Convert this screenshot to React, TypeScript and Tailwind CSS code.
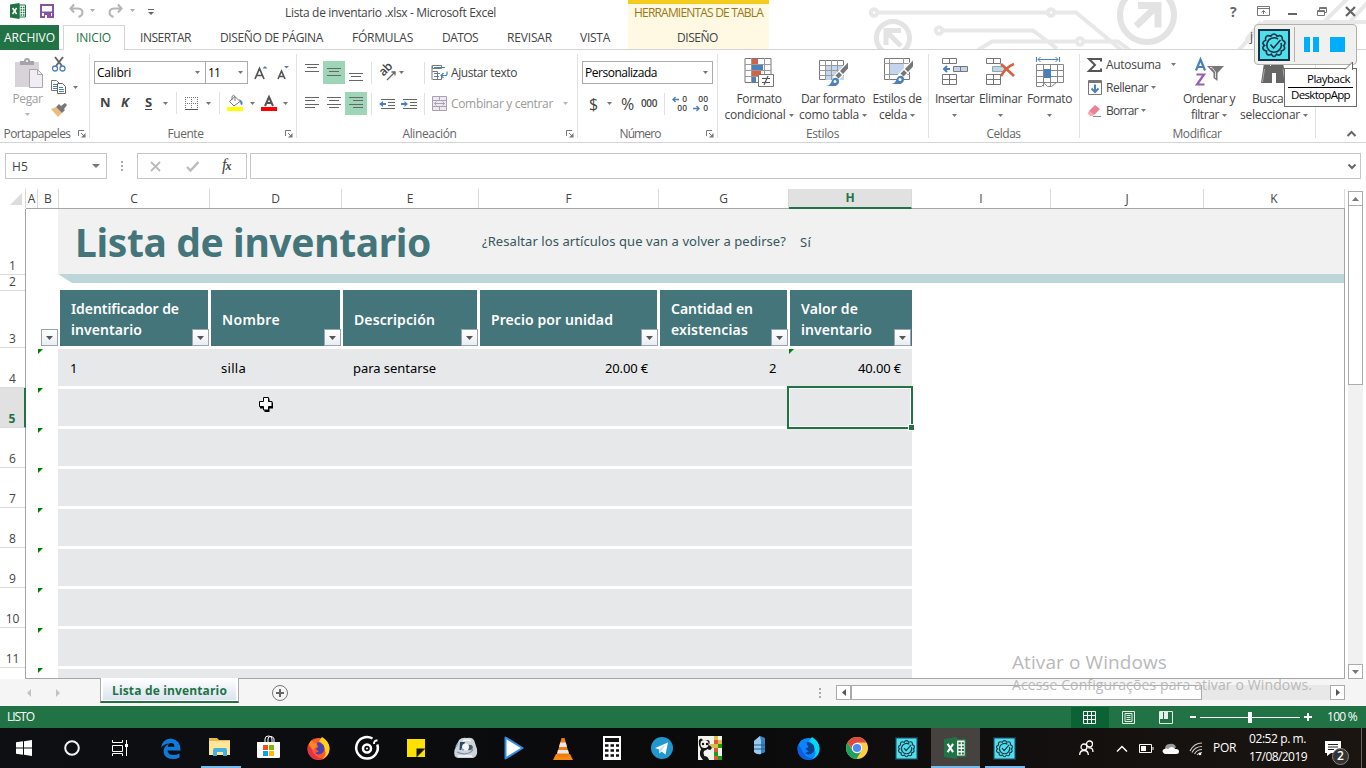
import { useLayoutEffect, useRef, useState, type ReactNode } from "react";

/* Single-line label whose tracking is adjusted so that it fills a given width. */
function T({ w, className = "", children }: { w: number; className?: string; children: string }) {
  const ref = useRef<HTMLSpanElement>(null);
  const [ls, setLs] = useState(0);
  useLayoutEffect(() => {
    const el = ref.current;
    if (el) setLs((w - el.getBoundingClientRect().width) / children.length);
  }, []);
  return (
    <span className={"block shrink-0 whitespace-nowrap " + className} style={{ width: w }}>
      <span ref={ref} className="inline-block" style={{ letterSpacing: ls }}>{children}</span>
    </span>
  );
}

function Svg({ w, h, className = "", children }: { w: number; h: number; className?: string; children: ReactNode }) {
  return (
    <svg width={w} height={h} viewBox={`0 0 ${w} ${h}`} fill="none" className={"block shrink-0 overflow-visible " + className}>
      {children}
    </svg>
  );
}

const Arrow = ({ className = "", c = "#777" }: { className?: string; c?: string }) => (
  <Svg w={5} h={3} className={className}><path d="M0 0h5L2.500 3z" fill={c} /></Svg>
);

const Sep = ({ className = "" }: { className?: string }) => <div className={"h-[22px] w-px shrink-0 bg-[#e1e1e1] " + className} />;

function Group({ className, label, lw, launcher = false, children }: { className: string; label: string; lw: number; launcher?: boolean; children: ReactNode }) {
  return (
    <div className={"flex h-[92px] shrink-0 flex-col " + className}>
      <div className="h-[75px] shrink-0">{children}</div>
      <div className="flex h-[17px] items-center text-[#666]">
        <div className="flex flex-1 justify-center pr-px"><T w={lw}>{label}</T></div>
        {launcher && (
          <div className="w-[14px] shrink-0 pl-[3px]">
            <Svg w={8} h={8}>
              <path d="M0.500 6V0.500H6M3 3l3 3" stroke="#777" /><path d="M7.500 3v4.500H3z" fill="#777" />
            </Svg>
          </div>
        )}
      </div>
    </div>
  );
}

const GroupSep = () => <div className="mt-[4px] h-[84px] w-px shrink-0 bg-[#e1e1e1]" />;

function Big({ className, icon, l1, w1, l2, w2 }: { className: string; icon: ReactNode; l1: string; w1: number; l2?: string; w2?: number }) {
  return (
    <div className={"flex shrink-0 flex-col items-center pt-[7px] " + className}>
      <div className="h-[34px]">{icon}</div>
      <div className="flex h-4 items-center"><T w={w1}>{l1}</T></div>
      <div className="flex h-4 items-center">
        {l2 && <T w={w2 ?? 0} className="mr-[3px]">{l2}</T>}
        <Arrow />
      </div>
    </div>
  );
}

const Lines = ({ d, className = "" }: { d: string; className?: string }) => (
  <Svg w={14} h={23} className={className}><path d={d} stroke="#666" /></Svg>
);

function Gear({ size }: { size: number }) {
  return (
    <svg width={size} height={size} viewBox="0 0 32 32" fill="none" className="block shrink-0">
      <rect x="1" y="1" width="30" height="30" fill="#4de0ea" stroke="#17344a" strokeWidth="2" />
      <g stroke="#17344a" strokeWidth="1.600">
        <path d="M16 5q2 0 3 2.200 3-1.200 4.300 0t1 3.700q2.700 1 2.700 3t-1.500 2.600q1.500 1.500 1 3.300t-3.200 2.200q.3 3-1.300 3.800t-3.500-.6Q17.500 27.500 16 27.500t-2.500-2.300q-2.500 1.300-4 .3t-1-3.500Q5.500 21.500 5 19.500t1.500-3Q4.500 15 5 13.500t2.700-2.300Q7 8.500 8.500 7.300t4.300-.1Q14 5 16 5z" />
        <path d="M20 10a7.200 7.200 0 1 0 3 4M12.500 15.500l3 3.500 7-8" />
      </g>
    </svg>
  );
}

function ExcelLogo({ size }: { size: number }) {
  return (
    <svg width={size} height={size} viewBox="0 0 16 16" className="block shrink-0">
      <path d="M9 2h6.500v12H9z" fill="#fff" stroke="#217346" />
      <path d="M10.500 4.500h1.700M13 4.500h1.500M10.500 7h1.700M13 7h1.500M10.500 9.500h1.700M13 9.500h1.500M10.500 12h1.700M13 12h1.500" stroke="#217346" strokeWidth="1.400" />
      <path d="M0 1.500L9.500 0v16L0 14.500z" fill="#217346" />
      <path d="M2.600 5l4 6M6.600 5l-4 6" stroke="#fff" strokeWidth="1.500" />
    </svg>
  );
}

function TitleBar() {
  return (
    <div className="relative flex h-[25px] items-start">
      <div className="ml-[10px] mt-[3px]"><ExcelLogo size={16} /></div>
      <Svg w={14} h={14} className="ml-[14px] mt-[4px]">
        <path d="M1 1h12v12H1z" fill="#fff" stroke="#8553a4" strokeWidth="2" /><path d="M2 7.500h10V9H2zM4 9h7v4H4z" fill="#8553a4" /><path d="M5 11h2v3H5z" fill="#fff" />
      </Svg>
      <Svg w={15} h={14} className="ml-[15px] mt-[4px]"><path d="M5 0.500L1.500 4.500 5 8.500M2 4.500h7q4.500.3 4.500 4 0 3-4 4.500" stroke="#b5b5b5" strokeWidth="2" /></Svg>
      <Arrow className="ml-[6px] mt-[9px]" c="#aaa" />
      <Svg w={15} h={14} className="ml-[13px] mt-[4px]"><path d="M10 0.500l3.500 4L10 8.500M13 4.500H6Q1.500 4.800 1.500 8.500q0 3 4 4.500" stroke="#b5b5b5" strokeWidth="2" /></Svg>
      <Arrow className="ml-[7px] mt-[9px]" c="#aaa" />
      <Svg w={6} h={6} className="ml-[13px] mt-[9px]"><path d="M0 .5h6" stroke="#666" /><path d="M0 3h6L3 6z" fill="#666" /></Svg>
      <div className="ml-[131px] flex h-[25px] items-center text-[#444]"><T w={211}>Lista de inventario .xlsx - Microsoft Excel</T></div>
      <div className="ml-[132px] flex h-[25px] w-[141px] shrink-0 items-center border-t-4 border-[#f5cb1d] bg-[#fff9e4] pb-[4px] text-[#9a7812]">
        <T w={129} className="ml-[6px]">HERRAMIENTAS DE TABLA</T>
      </div>
      <div className="ml-[461px] flex h-[22px] items-center">
        <span className="w-[9px] text-[14px] font-bold text-[#666]">?</span>
        <Svg w={13} h={10} className="ml-[18px]"><path d="M.5.500h12v9H.500zM.5 2.500h12M6.500 8V4.500M4.500 6.500l2-2 2 2" stroke="#777" /></Svg>
        <div className="ml-[18px] mt-[5px] h-[2px] w-[9px] bg-[#666]" />
        <Svg w={10} h={9} className="ml-[20px]"><path d="M.5 3.500h7v5h-7zM.5 4.500h7M2.500 3V.500h7v5H8M2.500 1.500h7" stroke="#777" /></Svg>
        <Svg w={9} h={9} className="ml-[19px]"><path d="M0 0l9 9M9 0L0 9" stroke="#666" strokeWidth="2.200" /></Svg>
      </div>
    </div>
  );
}

function Tabs() {
  return (
    <div className="relative flex h-[25px] text-[#444]">
      <div className="flex h-[25px] w-[59px] shrink-0 items-center bg-[#217346] text-white"><T w={51} className="ml-[4px]">ARCHIVO</T></div>
      <div className="flex flex-1 border-b border-[#d4d4d4]">
        <div className="-mb-px ml-[4px] flex h-[25px] w-[62px] shrink-0 items-center border-x border-t border-[#d4d4d4] bg-white text-[#217346]"><T w={35} className="ml-[12px]">INICIO</T></div>
        <div className="flex items-center pt-px">
          <T w={51} className="ml-[15px]">INSERTAR</T>
          <T w={103} className="ml-[29px]">DISEÑO DE PÁGINA</T>
          <T w={61} className="ml-[29px]">FÓRMULAS</T>
          <T w={36} className="ml-[29px]">DATOS</T>
          <T w={45} className="ml-[29px]">REVISAR</T>
          <T w={30} className="ml-[28px]">VISTA</T>
        </div>
        <div className="ml-[18px] flex w-[141px] shrink-0 items-center bg-[#fff9e4] pt-px"><T w={41} className="ml-[49px]">DISEÑO</T></div>
        <span className="ml-[481px] flex items-center">j</span>
      </div>
    </div>
  );
}

function Circuit() {
  return (
    <svg width="520" height="49" viewBox="846 0 520 49" fill="none" className="absolute left-[846px] top-0">
      <g stroke="#e8e8e8" strokeWidth="4">
        <path d="M878 12.500h169M1055 12.500h21l46 38M943 30.500h90l24 18M978 50l14-8.500h84M1083 41.500h35l12 9" />
        <path d="M1237 52l28-30h101M1322 24l26-26M1348 24l20-22M1246 40l15-18" />
        <circle cx="874" cy="12.500" r="3.200" /><circle cx="1051" cy="12.500" r="3.200" /><circle cx="939" cy="30.500" r="3.200" /><circle cx="1080" cy="41.500" r="3.200" />
      </g>
      <circle cx="893" cy="38" r="16.500" stroke="#e3e3e3" strokeWidth="5" />
      <path d="M901 46l-13-13M886 45V30.500h15" stroke="#e3e3e3" strokeWidth="5" />
      <circle cx="1147" cy="15" r="27" stroke="#e3e3e3" strokeWidth="6" />
      <path d="M1136 26l22-21M1138 5.500h20v22" stroke="#e3e3e3" strokeWidth="7" />
    </svg>
  );
}

const Brush = () => (
  <>
    <path d="M29 3.500v6L19 21l-4-3z" fill="#fff" stroke="#fff" strokeWidth="2" />
    <path d="M29 3.500v6l-5 5.500-3-3zM20 13l3 3-3.500 3.500-3-3z" fill="#777" />
    <path d="M7 27q5-.5 6-6 3-4 6.500-1 2 5-3 7z" fill="#4a81bb" /><circle cx="16" cy="22.500" r="1.500" fill="#fff" />
  </>
);

function Ribbon() {
  return (
    <div className="flex h-[93px] border-b border-[#d4d4d4] text-[#444]">
      <Group className="w-[89px]" label="Portapapeles" lw={67} launcher>
        <div className="flex">
          <div className="ml-[12px] flex w-[31px] flex-col items-center pt-[8px] text-[#a0a0a0]">
            <Svg w={29} h={30} className="ml-[2px]">
              <path d="M1 4h24v25H1z" fill="#d8d3d8" /><path d="M6 7V3h4q0-3 3-3t3 3h4v4z" fill="#a7a3a7" /><circle cx="13" cy="3" r="1" fill="#fff" />
              <path d="M15.500 11.500h8l5 5v13h-13z" fill="#f1edf5" stroke="#aaa6ac" /><path d="M23.500 11.500v5h5" stroke="#aaa6ac" />
            </Svg>
            <T w={30} className="mt-[2px] leading-[18px]">Pegar</T>
            <Arrow className="mt-[5px]" c="#b5b5b5" />
          </div>
          <div className="ml-[8px] pt-[7px]">
            <Svg w={16} h={15}><path d="M4 0l7 9M12 0L5 9" stroke="#666" strokeWidth="2" /><circle cx="4" cy="11.500" r="2.500" stroke="#4a81bb" strokeWidth="1.300" /><circle cx="11.500" cy="11.500" r="2.500" stroke="#4a81bb" strokeWidth="1.300" /></Svg>
            <div className="mt-[8px] flex items-center">
              <Svg w={16} h={14}>
                <path d="M.5.500h5l3 3v7h-8z" fill="#fff" stroke="#777" /><path d="M2 4.500h4M2 6.500h4M2 8.500h4" stroke="#4a81bb" />
                <path d="M6.500 3.500h5l3 3v7h-8z" fill="#fff" stroke="#666" /><path d="M8 7.500h4M8 9.500h5M8 11.500h5" stroke="#4a81bb" />
              </Svg>
              <Arrow className="ml-[6px]" />
            </div>
            <Svg w={16} h={14} className="mt-[9px]"><path d="M0 6l5-2 6 6-4 4z" fill="#e9bd7d" /><path d="M5 4l3-3 6 6-3 3zM10 3l4-3 2 2-3 4z" fill="#777" /></Svg>
          </div>
        </div>
      </Group>
      <GroupSep />
      <Group className="w-[206px]" label="Fuente" lw={36} launcher>
        <div className="ml-[4px] flex items-center pt-[11px]">
          <div className="flex h-[23px] w-[112px] shrink-0 items-center border border-[#ababab] text-black"><T w={34} className="ml-[2px]">Calibri</T><Arrow className="ml-[64px]" /></div>
          <div className="-ml-px flex h-[23px] w-[43px] shrink-0 items-center border border-[#ababab] text-black"><T w={12} className="ml-[2px]">11</T><Arrow className="ml-[18px]" /></div>
          <Svg w={13} h={14} className="ml-[6px]"><path d="M1 13L5.500 2.500 10 13M2.500 9.500h6" stroke="#555" strokeWidth="1.700" /><path d="M8.500 2.500h5L11 0z" fill="#4a81bb" /></Svg>
          <Svg w={12} h={14} className="ml-[10px]"><path d="M1 13l3.500-8L8 13M2.500 10.500h4" stroke="#555" strokeWidth="1.600" /><path d="M7 0h5L9.500 2.500z" fill="#4a81bb" /></Svg>
        </div>
        <div className="ml-[10px] mt-[7px] flex h-[24px] items-center text-[13px] font-bold">
          <T w={9}>N</T><T w={9} className="ml-[12px] italic">K</T><T w={7} className="ml-[15px] [&>span]:underline [&>span]:underline-offset-2">S</T>
          <Arrow className="ml-[11px]" /><Sep className="ml-[8px]" />
          <Svg w={13} h={13} className="ml-[8px]"><path d="M.5 0v12M6.500 0v12M12.500 0v12M0 .5h13M0 6.500h13" stroke="#777" strokeDasharray="1 1" /><path d="M0 12.500h13" stroke="#555" /></Svg>
          <Arrow className="ml-[8px]" /><Sep className="ml-[8px]" />
          <Svg w={16} h={16} className="ml-[7px]">
            <path d="M2.500 6.500L8 1.500l5 5-6 4.500zM5 5V1.500Q6.500-1 8 1.500V6" fill="#fff" stroke="#777" /><path d="M12 4q5 2 3 6.500Q13 9 13 6z" fill="#4a81bb" /><path d="M0 12h16v4H0z" fill="#ff0" />
          </Svg>
          <Arrow className="ml-[7px]" />
          <Svg w={16} h={15} className="ml-[6px]"><path d="M4 10L8 1l4 9M5.500 7h5" stroke="#555" strokeWidth="2" /><path d="M0 11h16v4H0z" fill="#f00" /></Svg>
          <Arrow className="ml-[6px]" />
        </div>
      </Group>
      <GroupSep />
      <Group className="w-[280px]" label="Alineación" lw={54} launcher>
        <div className="ml-[8px] flex items-center pt-[11px]">
          <Lines d="M0 3.500h14M2 6.500h10M0 10.500h14" />
          <div className="ml-[4px] bg-[#9fd5b7] px-[4px]"><Lines d="M0 7.500h14M2 10.500h10M0 14.500h14" /></div>
          <Lines className="ml-[4px]" d="M0 12.500h14M2 15.500h10M0 19.500h14" />
          <Sep className="ml-[8px]" />
          <div className="ml-[7px] flex w-[16px] items-center">
            <span className="-mt-[5px] block w-[11px] -rotate-45 text-[12px] font-semibold leading-none tracking-tighter">ab</span>
            <Svg w={9} h={9} className="-ml-[3px] mt-[5px]"><path d="M0 9L8 1M4.500 1H8v3.500" stroke="#666" strokeWidth="1.300" /></Svg>
          </div>
          <Arrow className="ml-[4px]" /><Sep className="ml-[20px]" />
          <Svg w={16} h={15} className="ml-[7px]">
            <path d="M.5.500h9v3h-9zM.5 6.500h5v8h-5" stroke="#777" /><path d="M0 .5v14M9.500 11v3.500H5" stroke="#777" /><path d="M2 2.500h11M2 8.500h6M2 11.500h5M9 10.500h5q1.500-.5 1-4M11.500 8L9 10.500l2.500 2.500" stroke="#4a81bb" strokeWidth="1.200" />
          </Svg>
          <T w={66} className="ml-[3px]">Ajustar texto</T>
        </div>
        <div className="ml-[8px] mt-[8px] flex items-center">
          <Lines d="M0 5.500h14M0 8.500h10M0 12.500h14M0 15.500h10" />
          <Lines className="ml-[8px]" d="M0 5.500h14M2 8.500h10M0 12.500h14M2 15.500h10" />
          <div className="ml-[4px] bg-[#9fd5b7] px-[4px]"><Lines d="M0 5.500h14M4 8.500h10M0 12.500h14M4 15.500h10" /></div>
          <Sep className="ml-[4px]" />
          <Svg w={16} h={10} className="ml-[7px]"><path d="M2 .5h14M9 3.500h7M9 6.500h7M2 9.500h14" stroke="#666" /><path d="M0 5l4-3v2h3v2H4v2z" fill="#4a81bb" /></Svg>
          <Svg w={16} h={10} className="ml-[6px]"><path d="M2 .5h14M9 3.500h7M9 6.500h7M2 9.500h14" stroke="#666" /><path d="M7 5L3.500 2v2H0v2h3.500v2z" fill="#4a81bb" /></Svg>
          <Sep className="ml-[7px]" />
          <Svg w={15} h={15} className="ml-[7px]"><path d="M.5.500h14v14H.500zM0 4.500h15M0 10.500h15M7.500 0v4M7.500 11v4" fill="#f0e9f5" stroke="#a8a3ab" /><path d="M2.500 7.500h10M4.500 5.500l-2 2 2 2M10.500 5.500l2 2-2 2" stroke="#a8a3ab" /></Svg>
          <T w={102} className="ml-[4px] text-[#9b9b9b]">Combinar y centrar</T>
          <Arrow className="ml-[10px]" c="#b5b5b5" />
        </div>
      </Group>
      <GroupSep />
      <Group className="w-[139px]" label="Número" lw={41} launcher>
        <div className="ml-[4px] mt-[11px] flex h-[23px] w-[131px] items-center justify-between border border-[#ababab] pl-[2px] pr-[4px] text-black"><T w={72}>Personalizada</T><Arrow /></div>
        <div className="ml-[11px] mt-[8px] flex h-[23px] items-center">
          <T w={9} className="text-[16px]">$</T><Arrow className="ml-[9px]" />
          <T w={13} className="ml-[9px] text-[16px]">%</T>
          <T w={16} className="ml-[7px] text-[10px] font-semibold">000</T>
          <Sep className="ml-[7px]" />
          <div className="ml-[7px] flex w-[15px] flex-col gap-px text-[8.5px] font-semibold leading-[8px]">
            <div className="flex h-[8px] items-center justify-between"><Svg w={7} h={5}><path d="M7 2.500H1.500M3.500 0L1 2.500 3.500 5" stroke="#4a81bb" strokeWidth="1.400" /></Svg><span>0</span></div>
            <div className="h-[8px] text-right">00</div>
          </div>
          <div className="ml-[6px] flex w-[15px] flex-col gap-px text-[8.5px] font-semibold leading-[8px]">
            <div className="h-[8px] text-right">00</div>
            <div className="flex h-[8px] items-center justify-between"><Svg w={7} h={5}><path d="M0 2.500h5.500M3.500 0L6 2.500 3.500 5" stroke="#4a81bb" strokeWidth="1.400" /></Svg><span>0</span></div>
          </div>
        </div>
      </Group>
      <GroupSep />
      <Group className="w-[210px]" label="Estilos" lw={33}>
        <div className="flex">
          <Big className="ml-[4px] w-[74px]" l1="Formato" w1={45} l2="condicional" w2={61} icon={
            <Svg w={30} h={31}>
              <path d="M1 1.500h26v24H1z" fill="#fff" stroke="#777" /><path d="M1 7.500h26M1 13.500h26M1 19.500h26M7.500 1v25M20.500 1v25" stroke="#999" />
              <path d="M8 2h6v5H8zM8 14h9v5H8z" fill="#d6603f" /><path d="M8 8h11v5H8zM8 20h4v5H8z" fill="#4a81bb" />
              <path d="M14.500 17.500h15v12h-15z" fill="#fff" stroke="#777" /><path d="M18 21.500h8M18 25.500h8M24 19l-4 9" stroke="#555" strokeWidth="1.200" />
            </Svg>} />
          <Big className="ml-[2px] w-[70px]" l1="Dar formato" w1={64} l2="como tabla" w2={60} icon={
            <Svg w={29} h={31} className="mt-[2px]">
              <path d="M.5 1.500h24v19H.500z" fill="#fff" stroke="#777" /><path d="M7 7h18v14H7z" fill="#c3d5ec" />
              <path d="M0 6.500h25M0 11.500h25M0 16.500h25M6.500 1v20M12.500 1v20M18.500 1v20" stroke="#999" /><Brush />
            </Svg>} />
          <Big className="ml-[2px] w-[54px]" l1="Estilos de" w1={49} l2="celda" w2={28} icon={
            <Svg w={29} h={31} className="ml-[2px]">
              <path d="M.5 1.500h25v21H.500z" fill="#fff" stroke="#777" /><path d="M0 6.500h26M0 17.500h26M5.500 1v22M19.500 1v22" stroke="#999" /><path d="M6 7h14v10H6z" fill="#c3d5ec" /><Brush />
            </Svg>} />
        </div>
      </Group>
      <GroupSep />
      <Group className="w-[150px]" label="Celdas" lw={34}>
        <div className="flex">
          <Big className="ml-[4px] w-[43px]" l1="Insertar" w1={39} icon={
            <Svg w={26} h={28}><path d="M.5 1.500h14v5H.500zM7.500 1.500v5M.5 17.500h14v10H.500zM7.500 17.500v10M.5 22.500h14" stroke="#777" /><path d="M11.500 9.500h14v5h-14z" fill="#c3d5ec" stroke="#777" /><path d="M18.500 9.500v5" stroke="#777" /><path d="M8 12H3M5 9l-3 3 3 3" stroke="#4a81bb" strokeWidth="2" /></Svg>} />
          <Big className="ml-[2px] w-[45px]" l1="Eliminar" w1={43} icon={
            <Svg w={29} h={28}><path d="M.5 1.500h14v5H.500zM7.500 1.500v5M.5 17.500h14v10H.500zM7.500 17.500v10M.5 22.500h14" stroke="#777" /><path d="M6.500 9.500h10l3 2.500-3 2.500h-10z" fill="#c3d5ec" stroke="#8aa" /><path d="M15 7l13 12M28 7q-8 3-13 12" stroke="#d6603f" strokeWidth="2.600" /></Svg>} />
          <Big className="ml-[2px] w-[49px]" l1="Formato" w1={45} icon={
            <Svg w={28} h={32}><path d="M.5 7.500h27v18H.500zM.5 13.500h27M.5 19.500h27M7.500 7.500v22M14.500 7.500v22M21.500 7.500v18M.5 25v4.500h5l3-3 3 3h4l5-4" stroke="#888" /><path d="M8 12h7v9H8z" fill="#4a81bb" /><path d="M.5 0v5M23.500 0v5M2 2.500h20M4.500 0L2 2.500 4.500 5M19.500 0L22 2.500 19.500 5" stroke="#4a81bb" /></Svg>} />
        </div>
      </Group>
      <GroupSep />
      <Group className="w-[235px]" label="Modificar" lw={49}>
        <div className="flex">
          <div className="ml-[7px] w-[95px] pt-[3px]">
            <div className="flex h-[23px] items-center"><Svg w={15} h={14}><path d="M14 3.500V1H2l6 6-6 6h12v-2.500" stroke="#555" strokeWidth="2" /></Svg><T w={55} className="ml-[4px]">Autosuma</T><Arrow className="ml-[10px]" /></div>
            <div className="flex h-[23px] items-center"><Svg w={15} h={15}><path d="M1.500.500h13v14h-13z" fill="#fff" stroke="#777" /><path d="M1 1h14v2H1z" fill="#777" /><path d="M8 4.500V12M4.500 8.500L8 12l3.500-3.500" stroke="#4a81bb" strokeWidth="2" /></Svg><T w={42} className="ml-[4px]">Rellenar</T><Arrow className="ml-[3px]" /></div>
            <div className="flex h-[23px] items-center"><Svg w={15} h={13}><path d="M8 1l5 4-6 6-5-4z" fill="#ec7f95" /><path d="M2 7l5 4-1.500 1H3L0.500 9.500z" fill="#f3aab8" /><path d="M6 12.500h8" stroke="#888" /></Svg><T w={32} className="ml-[4px]">Borrar</T><Arrow className="ml-[3px]" /></div>
          </div>
          <Big className="w-[54px]" l1="Ordenar y" w1={52} l2="filtrar" w2={28} icon={
            <Svg w={29} h={30} className="mt-[1px]"><path d="M1 12.500L5.500 1.500 10 12.500M2.500 9h6" stroke="#4a81bb" strokeWidth="2.200" /><path d="M1.500 16.500H9L2 26.500h7.500" stroke="#9560b4" strokeWidth="2.200" /><path d="M12 8h17l-6.500 7v8l-4-3v-5z" fill="#777" /><path d="M15 9.500h2l3.500 4.500v6" stroke="#ddd" /></Svg>} />
          <Big className="ml-[3px] w-[70px]" l1="Buscar y" w1={44} l2="seleccionar" w2={60} icon={
            <Svg w={26} h={26} className="mt-[2px]"><path d="M3 4h6v3h1V4h6v0h6l4 20H15V14h-4v10H0z" fill="#666" /><path d="M4 0h5v5H4zM17 0h5v5h-5z" fill="#666" /><path d="M3.500 10L1.500 23M22 10l2 13" stroke="#aaa" /></Svg>} />
        </div>
      </Group>
      <GroupSep />
      <Svg w={9} h={6} className="ml-[31px] mt-[81px]"><path d="M.5 5L4.500 1l4 4" stroke="#666" strokeWidth="2" /></Svg>
    </div>
  );
}

function FormulaBar() {
  return (
    <div className="flex h-[46px] items-start pt-[10px]">
      <div className="ml-[5px] flex h-[26px] w-[102px] shrink-0 items-center justify-between border border-[#c6c6c6] pl-[6px] pr-[6px] text-[#444]"><T w={16} className="pt-px">H5</T><Svg w={8} h={4}><path d="M0 0h8L4 4z" fill="#777" /></Svg></div>
      <Svg w={2} h={10} className="ml-[14px] mt-[8px]"><path d="M1 0v2M1 4v2M1 8v2" stroke="#aaa" strokeWidth="2" /></Svg>
      <div className="ml-[14px] flex h-[26px] w-[110px] shrink-0 items-center border border-[#c6c6c6]">
        <Svg w={11} h={11} className="ml-[12px]"><path d="M1 1l9 9M10 1l-9 9" stroke="#bbb" strokeWidth="1.800" /></Svg>
        <Svg w={13} h={11} className="ml-[25px]"><path d="M1 6l3.500 3.500L12.500 1" stroke="#bbb" strokeWidth="2.400" /></Svg>
        <span className="ml-[23px] w-[14px] whitespace-nowrap pb-[3px] font-['Liberation_Serif',serif] text-[16px] italic tracking-[-1px] text-[#444]">f<span className="text-[12px] font-bold">x</span></span>
      </div>
      <div className="ml-[3px] flex h-[26px] w-[1111px] items-center justify-end border border-[#c6c6c6] pr-[4px]"><Svg w={8} h={5}><path d="M.5.500L4 4 7.500.500" stroke="#666" strokeWidth="2" /></Svg></div>
    </div>
  );
}

const columns = [
  { n: "A", c: "w-[12px]" }, { n: "B", c: "w-[21px]" }, { n: "C", c: "w-[151px]" }, { n: "D", c: "w-[132px]" },
  { n: "E", c: "w-[137px]" }, { n: "F", c: "w-[180px]" }, { n: "G", c: "w-[130px]" }, { n: "H", c: "w-[123px]" },
  { n: "I", c: "w-[139px]" }, { n: "J", c: "w-[153px]" }, { n: "K", c: "w-[141px]" },
];

function ColumnHeads() {
  return (
    <div className="flex h-[20px] text-[12px] text-[#444]">
      <div className="flex h-[19px] w-[26px] shrink-0 justify-end border-r border-[#d9d9d9] pr-[3px] pt-[4px]"><Svg w={12} h={12}><path d="M12 0v12H0z" fill="#dcdcdc" /></Svg></div>
      <div className="flex h-[20px] border-b border-[#a6a6a6]">
        {columns.map((col) => (
          <div key={col.n} className={"flex shrink-0 items-center justify-center border-r border-[#d9d9d9] " + col.c + (col.n === "H" ? " -mb-px border-b-2 border-b-[#217346] bg-[#e1e1e1] font-bold text-[#217346]" : "")}>{col.n}</div>
        ))}
      </div>
    </div>
  );
}

const Filter = () => (
  <div className="flex size-[17px] shrink-0 items-center justify-center border border-[#9aa3ae] bg-linear-to-b from-white to-[#e9edf4]"><Svg w={7} h={4}><path d="M0 0h7L3.500 4z" fill="#555" /></Svg></div>
);

const heads = [
  { c: "ml-[2px] w-[149px]", l: [["Identificador de", 108], ["inventario", 71]] },
  { c: "ml-[2px] w-[130px]", l: [["Nombre", 58]] },
  { c: "ml-[2px] w-[135px]", l: [["Descripción", 81]] },
  { c: "ml-[2px] w-[178px]", l: [["Precio por unidad", 122]] },
  { c: "ml-[2px] w-[128px]", l: [["Cantidad en", 82], ["existencias", 77]] },
  { c: "ml-[2px] w-[122px]", l: [["Valor de", 57], ["inventario", 71]] },
] as { c: string; l: [string, number][] }[];

const rowHeads = ["h-[66px]", "h-[16px]", "h-[57px]", "h-[40px]", "h-[40px]", "h-[40px]", "h-[40px]", "h-[40px]", "h-[40px]", "h-[40px]", "h-[40px]"];
const Flag = ({ className = "" }: { className?: string }) => <Svg w={5} h={5} className={className}><path d="M0 0h5L0 5z" fill="#008000" /></Svg>;

function Sheet() {
  return (
    <div className="flex h-[470px] overflow-hidden">
      <div className="w-[26px] shrink-0 border-r border-[#a6a6a6] text-[12px] text-[#444]">
        {rowHeads.map((h, i) => (
          <div key={i} className={"flex items-end justify-center border-b border-[#d9d9d9] leading-[17px] " + h + (i === 4 ? " -mr-px border-r-2 border-r-[#217346] bg-[#e1e1e1] font-bold text-[#217346]" : "")}>{i + 1}</div>
        ))}
      </div>
      <div className="relative h-[470px] w-[1319px] shrink-0 overflow-hidden border-b border-r border-[#a6a6a6] font-['Noto_Sans',sans-serif]">
        <div className="ml-[32px] flex h-[65px] items-center bg-[#f1f1f1]">
          <T w={356} className="ml-[17px] text-[39px] font-bold leading-[60px] text-[#44757a]">Lista de inventario</T>
          <T w={304} className="ml-[51px] text-[13px] text-[#35565c]">¿Resaltar los artículos que van a volver a pedirse?</T>
          <T w={11} className="ml-[14px] pt-[2px] text-[13px] text-[#35565c]">Sí</T>
        </div>
        <div className="ml-[32px] h-[9px] bg-[#bcd6d9] [clip-path:polygon(0_0,100%_0,100%_100%,14px_100%)]" />
        <div className="mt-[7px] flex h-[56px]">
          <div className="flex w-[32px] shrink-0 items-end justify-end"><Filter /></div>
          {heads.map((h, i) => (
            <div key={i} className={"flex shrink-0 " + h.c}>
              <div className={"flex h-[56px] items-end bg-[#44757a] " + (i < 5 ? "w-[calc(100%-1px)]" : "w-full")}>
                <div className="flex h-[56px] flex-1 flex-col justify-center pl-[11px] pt-[2px] text-[14px] font-semibold leading-[21px] text-white">
                  {h.l.map(([t, w]) => <T key={t} w={w}>{t}</T>)}
                </div>
                <div className={i < 5 ? "-ml-[17px] -mr-px" : "-ml-[17px] mr-px"}><Filter /></div>
              </div>
            </div>
          ))}
        </div>
        <div className="mt-[3px] flex h-[37px]">
          <Flag className="ml-[12px]" />
          <div className="ml-[15px] flex w-[854px] items-center bg-[#e6e8ea] text-[13px] text-black">
            <T w={8} className="ml-[12px] pt-[2px]">1</T>
            <T w={25} className="ml-[143px] pt-[2px]">silla</T>
            <T w={83} className="ml-[107px] pt-[2px]">para sentarse</T>
            <T w={43} className="ml-[169px] pt-[2px]">20.00 €</T>
            <T w={8} className="ml-[121px] pt-[2px]">2</T>
            <Flag className="ml-[12px] self-start" />
            <T w={43} className="ml-[64px] pt-[2px]">40.00 €</T>
          </div>
        </div>
        {[5, 6, 7, 8, 9, 10, 11, 12].map((n) => (
          <div key={n} className="mt-[2px] flex h-[38px]">
            <Flag className="ml-[12px]" />
            <div className="ml-[15px] mt-px w-[854px] bg-[#e6e8ea]" />
          </div>
        ))}
        <div className="absolute left-[761px] top-[177px] h-[43px] w-[126px] border-2 border-[#217346] shadow-[inset_0_0_0_1px_#fff]">
          <div className="absolute -bottom-[4px] -right-[4px] size-[7px] border border-white bg-[#217346]" />
        </div>
        <Svg w={16} h={16} className="absolute left-[232px] top-[187px]">
          <path d="M6.500 2.500h5v4H15v6h-3.500V16h-5v-3.500H2v-5h4.500z" fill="#000" /><path d="M5.500 1.500h5v4H14v5h-3.500V14h-5v-3.500H1.500v-5h4z" fill="#fff" stroke="#000" />
        </Svg>
      </div>
    </div>
  );
}

function VScroll() {
  return (
    <div className="absolute left-[1348px] top-[191px] flex h-[488px] w-[15px] flex-col bg-[#f1f1f1]">
      <div className="flex h-[15px] shrink-0 items-center justify-center border border-[#ababab] bg-white"><Svg w={7} h={4}><path d="M0 4h7L3.500 0z" fill="#777" /></Svg></div>
      <div className="h-[179px] shrink-0 border-x border-b border-[#ababab] bg-white" />
      <div className="flex-1" />
      <div className="flex h-[15px] shrink-0 items-center justify-center border border-[#ababab] bg-white"><Svg w={7} h={4}><path d="M0 0h7L3.500 4z" fill="#777" /></Svg></div>
    </div>
  );
}

function SheetTabs() {
  return (
    <div className="relative flex h-[27px] items-center bg-[#f5f5f5]">
      <Svg w={4} h={8} className="ml-[27px]"><path d="M4 0v8L0 4z" fill="#c3c3c3" /></Svg>
      <Svg w={4} h={8} className="ml-[25px]"><path d="M0 0v8l4-4z" fill="#c3c3c3" /></Svg>
      <div className="-mt-[4px] ml-[40px] flex h-[25px] w-[139px] shrink-0 flex-col border-x border-b-2 border-x-[#ababab] border-b-[#217346] bg-white">
        <div className="mx-[2px] mb-[1px] flex flex-1 items-center justify-center bg-linear-to-b from-white to-[#dbe3ef] pt-[4px] font-bold text-[#217346]"><T w={115}>Lista de inventario</T></div>
      </div>
      <Svg w={16} h={16} className="ml-[33px]"><circle cx="8" cy="8" r="7.500" stroke="#777" /><path d="M8 4v8M4 8h8" stroke="#666" strokeWidth="2" /></Svg>
      <Svg w={2} h={10} className="ml-[531px]"><path d="M1 0v2M1 4v2M1 8v2" stroke="#aaa" strokeWidth="2" /></Svg>
      <div className="ml-[15px] flex h-[15px] w-[509px] shrink-0 bg-[#e8e8e8]">
        <div className="flex w-[15px] items-center justify-center border border-[#ababab] bg-white"><Svg w={4} h={7}><path d="M4 0v7L0 3.500z" fill="#555" /></Svg></div>
        <div className="w-[351px] border border-[#ababab] bg-white" />
        <div className="flex-1" />
        <div className="flex w-[15px] items-center justify-center border border-[#ababab] bg-white"><Svg w={4} h={7}><path d="M0 0v7l4-3.500z" fill="#555" /></Svg></div>
      </div>
    </div>
  );
}

function StatusBar() {
  return (
    <div className="flex h-[22px] items-center bg-[#217346] text-white">
      <T w={27} className="ml-[7px]">LISTO</T>
      <div className="ml-[1037px] flex h-[21px] w-[38px] items-center justify-center self-end bg-[#0b6234]"><Svg w={13} h={13} className="-ml-px"><path d="M.5.500h12v12H.500zM4.500 0v13M8.500 0v13M0 4.500h13M0 8.500h13" stroke="#fff" /></Svg></div>
      <Svg w={13} h={13} className="ml-[13px]"><path d="M.5.500h12v12H.500zM3 2.500h7v8H3zM4.500 4.500h4M4.500 6.500h4M4.500 8.500h4" stroke="#e4f0e8" /></Svg>
      <Svg w={14} h={13} className="ml-[24px]"><path d="M.5.500h13v12H.500z" stroke="#e4f0e8" /><path d="M1 1h3v7H1zM5 1h4v7H5z" fill="#e4f0e8" /></Svg>
      <div className="ml-[17px] h-[2px] w-[6px] bg-white" />
      <div className="ml-[4px] flex h-px w-[100px] items-center justify-center bg-white"><div className="h-[11px] w-[4px] bg-white" /></div>
      <Svg w={8} h={8} className="ml-[4px]"><path d="M4 0v8M0 4h8" stroke="#fff" strokeWidth="2" /></Svg>
      <T w={30} className="ml-[15px]">100 %</T>
    </div>
  );
}

const Slot = ({ children, line = "", active = false }: { children: ReactNode; line?: string; active?: boolean }) => (
  <div className={"relative flex h-[40px] w-[49px] shrink-0 items-center justify-center " + (active ? "bg-[#454240]" : "")}>
    {children}
    {line && <div className={"absolute bottom-0 h-[2px] bg-[#76b9ed] " + line} />}
  </div>
);

function FirefoxIcon({ dev }: { dev: boolean }) {
  const [a, b, c, d] = dev ? ["#0a84ff", "#00d8f5", "#0b5fe0", "#123e8a"] : ["#ff5a2a", "#ffd21a", "#e8304a", "#4a3fb8"];
  return (
    <Svg w={23} h={23}>
      <circle cx="11.500" cy="12" r="11" fill={a} />
      <path d="M12 4q3-4 3-4 7 4 7.500 11Q22.500 19 15 22.500q5-4 3-9-1-6-6-9.500z" fill={b} />
      <path d="M1 8q-2 12 9 14.500 4 .5 6-1Q7 21 4 11z" fill={c} />
      <path d="M8 6q5-2 8.500 2 2 4-.5 7.500-4 3.500-8 .5l4-1.500-3.500-2.500q1.500-1 3-2.500-1-2-3.500-3.500z" fill={d} />
      <path d="M2 7l2.500-4L7 6l3-.5-.5 4L6 13z" fill={dev ? "#0a84ff" : "#ff8a1c"} />
    </Svg>
  );
}

function Taskbar() {
  return (
    <div className="flex h-[40px] bg-linear-to-r from-[#0d0f13] via-[#0a0a0b] to-[#1a1511] text-white">
      <div className="flex w-[48px] items-center justify-center"><Svg w={16} h={16}><path d="M0 2.300l7-1V7.500H0zM8 1.200L16 0v7.500H8zM0 8.500h7v6.200l-7-1zM8 8.500h8V16l-8-1.200z" fill="#fff" /></Svg></div>
      <div className="flex w-[48px] items-center justify-center"><Svg w={16} h={16}><circle cx="8" cy="8" r="6.800" stroke="#f3f3f3" strokeWidth="2" /></Svg></div>
      <div className="flex w-[48px] items-center justify-center"><Svg w={16} h={16}><path d="M.5 0v2.500h10V0M.5 5.500h10v6H.500zM.5 16v-2.500h10V16M14.500 0v16" stroke="#fff" /><path d="M13 4h3v3h-3z" fill="#fff" /></Svg></div>
      <div className="ml-[3px] flex">
        <Slot><Svg w={20} h={21} className="-ml-px"><path d="M0 10Q1 1 10 0.500q9.500 1 9.500 12H6.500q.5 4.500 6 4.500 3 0 6-1.500v4Q15.500 21 12 21 3 21 2.500 13 3 8 8 5.500 2 6 0 10zM6.800 8.800h6.700q0-3.800-3.300-3.800T6.800 8.800z" fill="#0c7bdc" fillRule="evenodd" /></Svg></Slot>
        <Slot line="w-[40px]"><Svg w={22} h={20} className="-ml-[2px] -mt-[2px]"><path d="M0 1h8l2 2h11v14H0z" fill="#e8b94b" /><path d="M0 4h21v14H0z" fill="#ffe699" /><path d="M4 19v-6q0-2 2-2h10q2 0 2 2v6h-4v-4H8v4z" fill="#42b0e0" /></Svg></Slot>
        <Slot><Svg w={23} h={24} className="-ml-[2px] -mt-[2px]"><path d="M8 8V4q0-3 3.500-3T15 4v4M11 8V4q0-3 3-2.500T17 4v4" stroke="#fff" /><path d="M0 7h23v15q0 1-1.500 1h-20Q0 23 0 22z" fill="#fff" /><path d="M6 10h5v5H6z" fill="#f25022" /><path d="M12 10h5v5h-5z" fill="#7fba00" /><path d="M6 16h5v5H6z" fill="#00a4ef" /><path d="M12 16h5v5h-5z" fill="#ffb900" /></Svg></Slot>
        <Slot><FirefoxIcon dev={false} /></Slot>
        <Slot><Svg w={24} h={24} className="-ml-px"><path d="M17.500 2.500A10.800 10.800 0 1 0 22.300 8.500" stroke="#fff" strokeWidth="2.500" /><circle cx="12" cy="12.500" r="4" stroke="#fff" strokeWidth="2.500" /><circle cx="12" cy="12.500" r="1" fill="#fff" /><path d="M22.500 4.500q-3.500-.5-3.500 3.500" stroke="#fff" strokeWidth="2" /></Svg></Slot>
        <Slot><Svg w={18} h={18} className="-ml-px"><path d="M0 0h18v18H0z" fill="#ffe100" /><path d="M9.500 9.500H18L9.500 18z" fill="#111" /><path d="M18 9.500V18H9.500z" fill="#111" /><path d="M10 18L18 10v8z" fill="#ffe100" /></Svg></Slot>
        <Slot><Svg w={24} h={22}><path d="M5 3q3-3 8-2 7-1 8 5l2 6q1 8-4 9H4q-5-1-3.500-8z" fill="#ccd3d9" /><path d="M6 5h5l-2 8H5.500z" fill="#32465e" /><path d="M14 8q4-1 5 2-1 4-5 3z" fill="#4a5c70" /><circle cx="11.500" cy="10" r="3.500" fill="#f4f7fa" /><path d="M3 15q6 3 12 1 3-1 4-4" stroke="#8792a0" strokeWidth="1.200" /><path d="M2 10l2-4M7 12l3 1" stroke="#7ba8d6" strokeWidth="1.600" /><path d="M9 4q4-2 8 0M4 19h14" stroke="#f4f7fa" strokeWidth="1.500" /></Svg></Slot>
        <Slot><Svg w={20} h={24} className="-ml-[2px]"><path d="M1.500 1.500v21L18.500 12z" fill="#fff" stroke="#2f8de8" strokeWidth="2" strokeLinejoin="round" /></Svg></Slot>
        <Slot><Svg w={20} h={23} className="-ml-px"><path d="M3 17h14l3 6H0z" fill="#f58a12" /><path d="M8.500 1h3l5 18q-6.500 3-13 0z" fill="#f07c0d" /><path d="M7.200 5.500h5.600l1.200 4.500H6zM5 13h10l1 3.500H4z" fill="#e8e8e8" /></Svg></Slot>
        <Slot><Svg w={18} h={24} className="-ml-px"><path d="M0 0h18v24H0z" fill="#fff" /><path d="M2 2h14v4H2z" fill="#111" /><path d="M2 9.500h3.500M7.500 9.500H11M13 9.500h3M2 14.500h3.500M7.500 14.500H11M13 14.500h3M2 19.500h3.500M7.500 19.500H11M13 19.500h3" stroke="#111" strokeWidth="2.500" /></Svg></Slot>
        <Slot><Svg w={22} h={22}><circle cx="11" cy="11" r="11" fill="#2197cf" /><path d="M4 11l13-5.500-2.500 12-4-3-2 2L8 12.500z" fill="#fff" /><path d="M8 12.500L15 7.500 10 14l-1.500 2.500z" fill="#b9dff2" /></Svg></Slot>
        <Slot><Svg w={24} h={24} className="-ml-px"><path d="M0 0h24v24H0z" fill="#f3f3ed" /><path d="M16 0h4v4h-4zM12 8h8v4h-8zM20 4h4v4h-4z" fill="#e0bd49" /><path d="M16 4h4v4h-4zM16 12h4v4h-4zM16 20h4v4h-4z" fill="#d55d39" /><path d="M20 8h4v4h-4zM16 16h4v4h-4zM20 20h4v4h-4z" fill="#16a313" /><path d="M1 4q2-3 4 0h4q4 0 2 5 5 3 1 5l-3-1-3 7q4 0 5 4H5q-5-5-2-11-3-4-2-9z" fill="#161616" /><circle cx="6.500" cy="8" r="4" fill="#f5f5f5" /><circle cx="5" cy="8" r="1.200" fill="#111" /><circle cx="9" cy="8" r="1.200" fill="#111" /><ellipse cx="9" cy="17" rx="3.500" ry="3" fill="#f5f5f5" /></Svg></Slot>
        <Slot><Svg w={13} h={20} className="-mt-[5px]"><path d="M1 5l6-5 5 2v14q-6 4-11 0z" fill="#3583c0" /><path d="M1 5l6-5 1 5v13q-4 1-7-2z" fill="#9dcaec" /><path d="M1 9h11M1 13h11" stroke="#225f9b" /></Svg></Slot>
        <Slot><FirefoxIcon dev /></Slot>
        <Slot><Svg w={22} h={22} className="-ml-px"><circle cx="11" cy="11" r="11" fill="#ffcd46" /><path d="M1.500 5.500A11 11 0 0 1 20.500 5.500H11L7 13.500z" fill="#dd4b3e" /><path d="M1.500 5.500A11 11 0 0 0 10.500 22L15.500 13.500 6.500 13.500z" fill="#1da160" /><circle cx="11" cy="11" r="5.200" fill="#fff" /><circle cx="11" cy="11" r="4.100" fill="#4c8bf5" /></Svg></Slot>
        <Slot><Gear size={23} /></Slot>
        <Slot active line="w-full"><div className="-ml-[2px]"><ExcelLogo size={22} /></div></Slot>
        <Slot line="w-[40px]"><Gear size={23} /></Slot>
      </div>
      <div className="flex items-center">
        <Svg w={15} h={16} className="ml-[50px]"><circle cx="5" cy="7" r="3" stroke="#fff" strokeWidth="1.300" /><path d="M.7 15q0-4.500 4.300-4.500T9.300 15" stroke="#fff" strokeWidth="1.300" /><circle cx="10.500" cy="4" r="3" stroke="#fff" strokeWidth="1.300" /><path d="M9.500 8q4.500-1 4.500 4" stroke="#fff" strokeWidth="1.300" /></Svg>
        <Svg w={12} h={7} className="ml-[22px]"><path d="M1 6.500l5-5 5 5" stroke="#fff" strokeWidth="1.500" /></Svg>
        <Svg w={15} h={9} className="ml-[11px]"><path d="M.5.500h12v8H.500zM14 3v3" stroke="#fff" /><path d="M2 2h5v5H2z" fill="#fff" /></Svg>
        <Svg w={17} h={11} className="ml-[8px]"><path d="M3 6q0-5 5-5 4-1 6 3l-4 5H3z" fill="#999" /><path d="M2 10.500Q-1 8 2 6q3-1 4 0 4-4 7 0 4-.5 4 2.500 0 2.500-3 2.500H3z" fill="#fff" /></Svg>
        <Svg w={13} h={13} className="ml-[10px]"><path d="M1 9Q5 1 13 1M3 10.500Q6 4.500 13 4.500M5.500 12Q8 7.500 13 7.500M8 13q2-2.500 5-2.500" stroke="#ccc" strokeWidth="1.200" /><circle cx="11" cy="12" r="1.300" fill="#fff" /></Svg>
        <T w={23} className="ml-[11px]">POR</T>
        <div className="ml-[13px] w-[58px] text-[12px] leading-[18px]"><T w={57}>02:52 p. m.</T><T w={58}>17/08/2019</T></div>
        <div className="relative ml-[18px]">
          <Svg w={16} h={15}><path d="M0 0h16v12H6l-4 3v-3H0z" fill="#fff" /><path d="M3 3.500h10M3 6h10M3 8.500h6" stroke="#222" /></Svg>
          <div className="absolute left-[7px] top-[7px] flex size-[17px] items-center justify-center rounded-full border border-[#888] bg-[#333] text-[12px] font-semibold">2</div>
        </div>
        <div className="ml-[20px] h-[40px] w-px bg-[#666]" />
      </div>
    </div>
  );
}

function Playback() {
  return (
    <>
      <div className="absolute left-[1254px] top-[24px] flex h-[41px] w-[103px] items-center rounded-[4px] border border-[#b4b1a9] bg-[#f0f0ef] pl-[3px]">
        <Gear size={32} />
        <div className="ml-[4px] h-[35px] w-px bg-[#b4b1a9]" />
        <div className="ml-[9px] h-[15px] w-[6px] bg-[#00aeff]" /><div className="ml-[3px] h-[15px] w-[6px] bg-[#00aeff]" />
        <div className="ml-[11px] size-[15px] bg-[#00aeff]" />
      </div>
      <div className="absolute left-[1284px] top-[68px] flex h-[39px] w-[73px] flex-col items-end border border-[#6b6b6b] bg-white pr-[6px] pt-px text-[11.5px] text-black">
        <T w={43} className="leading-[17px]">Playback</T>
        <div className="-mr-[3px] h-px w-[65px] shrink-0 bg-black" />
        <T w={59} className="leading-[13px]">DesktopApp</T>
        <Svg w={8} h={9} className="absolute -top-[8px] right-[3px]"><path d="M0 8.500L7.500 1v8" fill="#fff" stroke="#6b6b6b" /></Svg>
      </div>
    </>
  );
}

export default function App() {
  return (
    <div className="relative h-[768px] w-[1366px] overflow-hidden bg-white font-['Open_Sans','Noto_Sans',sans-serif] text-[12px]">
      <Circuit />
      <TitleBar />
      <Tabs />
      <Ribbon />
      <FormulaBar />
      <ColumnHeads />
      <Sheet />
      <SheetTabs />
      <StatusBar />
      <Taskbar />
      <VScroll />
      <Playback />
      <div className="pointer-events-none absolute left-[1012px] top-[649px] text-[#b9b9b9]">
        <T w={155} className="text-[19px] leading-[26px]">Ativar o Windows</T>
        <T w={300} className="text-[14px] leading-[19px]">Acesse Configurações para ativar o Windows.</T>
      </div>
    </div>
  );
}
